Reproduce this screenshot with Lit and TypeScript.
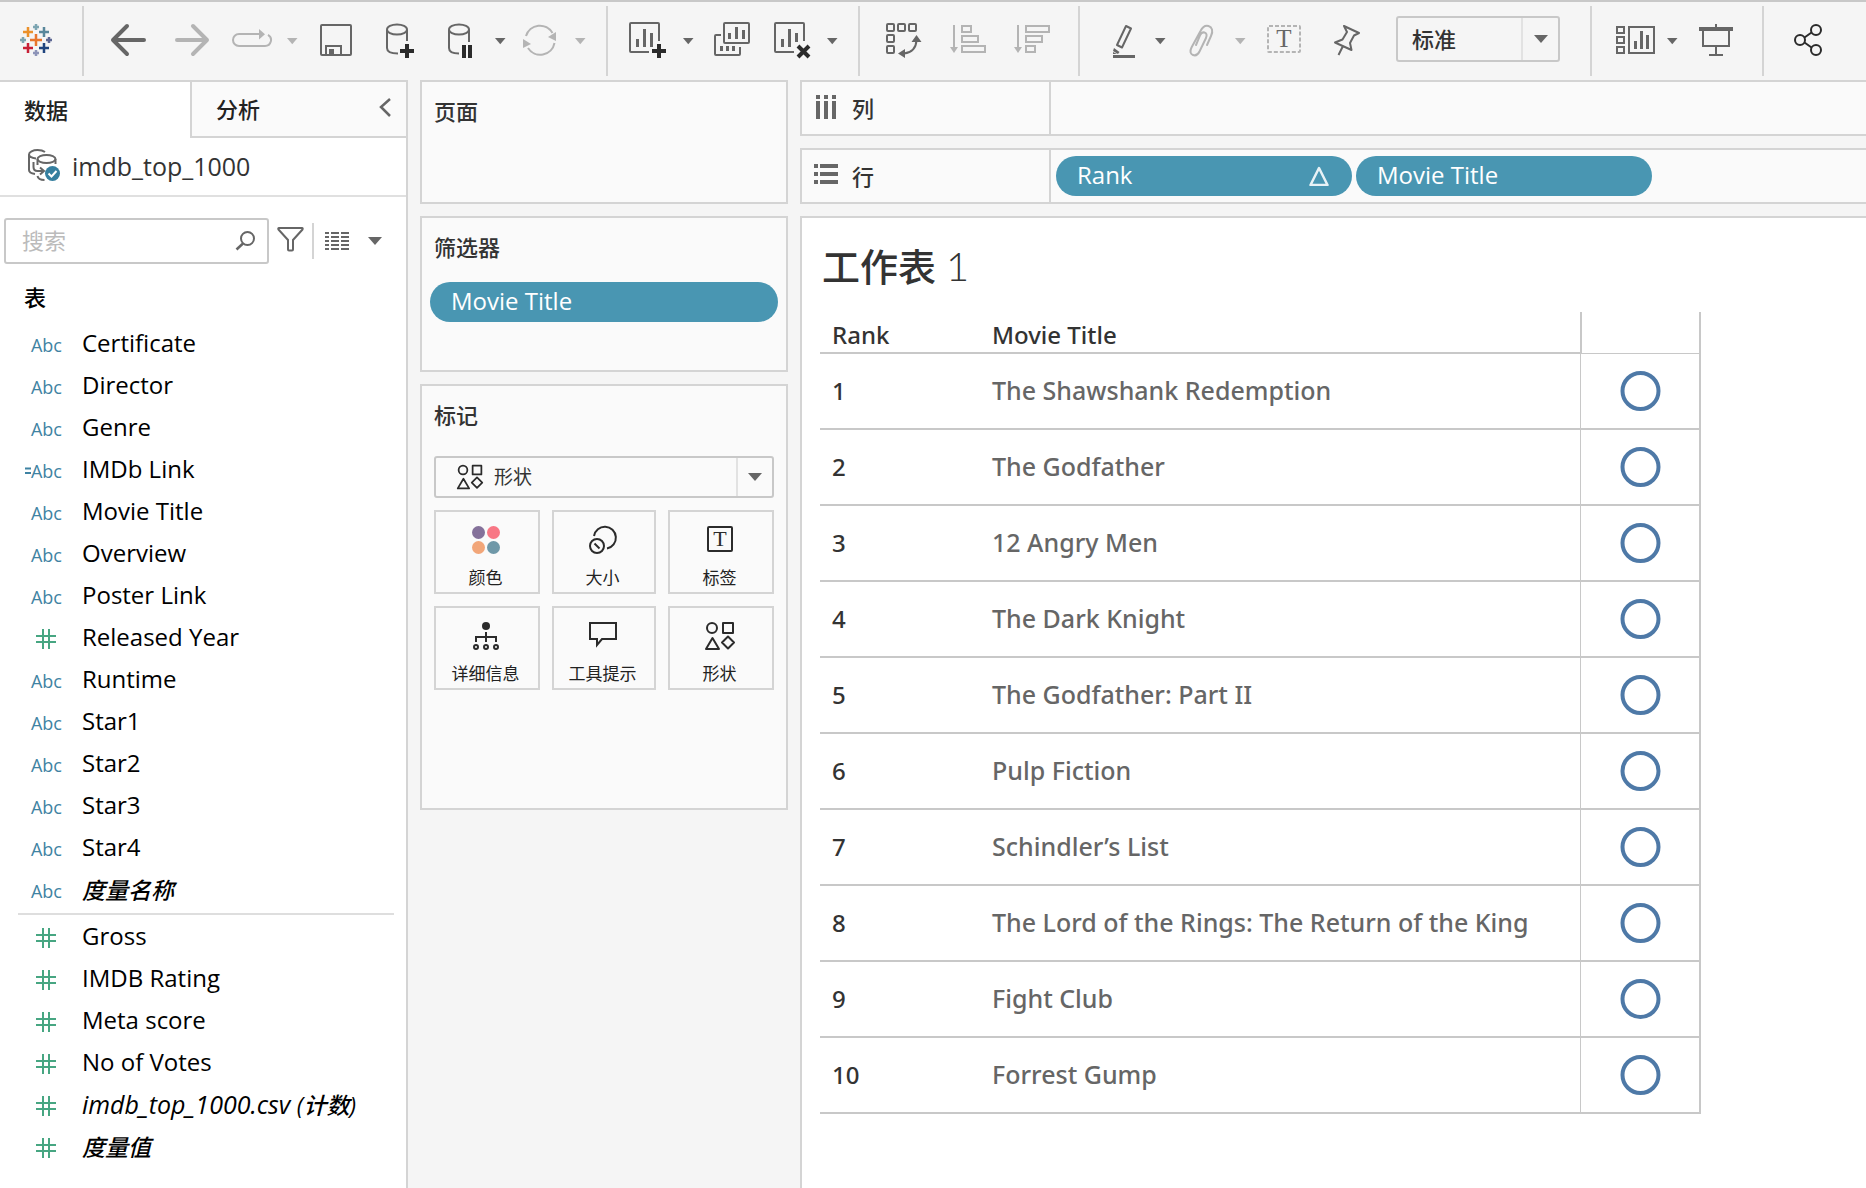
import { LitElement, html, svg, css, nothing, type TemplateResult } from "lit";
import { customElement, property } from "lit/decorators.js";

const glyph = (w: number, h: number, body: unknown) =>
  html`<svg width=${w} height=${h} viewBox="0 0 ${w} ${h}" fill="none" aria-hidden="true">${body}</svg>`;

const DARK = "#666666";
const MUTED = "#b4b4b4";
const INK = "#2b2b2b";

/* Toolbar drawings: 40 tall, 64, 56 or 24 wide. */
const toolArt: Record<string, unknown> = {
  back: svg`<path d="M31 6L17 20L31 34M17 20H48" stroke=${DARK} stroke-width="4" stroke-linecap="round" stroke-linejoin="round"/>`,
  forward: svg`<path d="M33 6L47 20L33 34M17 20H47" stroke=${MUTED} stroke-width="4" stroke-linecap="round" stroke-linejoin="round"/>`,
  replay: svg`<path d="M36 14H15a6 6 0 0 0 0 12H41a6 6 0 0 0 3-11.2" stroke=${MUTED} stroke-width="2"/><path d="M35 9l6 5.3-6 5.2z" fill=${MUTED}/>`,
  save: svg`<rect x="17" y="5" width="30" height="30" rx="1" stroke=${DARK} stroke-width="2"/><path d="M22 35V26H37V35" stroke=${DARK} stroke-width="2"/><rect x="25" y="29" width="5" height="5" fill=${DARK}/>`,
  addData: svg`<g stroke=${DARK} stroke-width="2"><ellipse cx="29" cy="9.5" rx="10" ry="5"/><path d="M19 10V28c0 3.500 4 5.500 11 5.500M39 10V21"/></g><path d="M39 24V38M32 31H46" stroke=${INK} stroke-width="4"/>`,
  pause: svg`<g stroke=${DARK} stroke-width="2"><ellipse cx="27" cy="9.5" rx="10" ry="5"/><path d="M17 10V28c0 3.500 4 5.500 10 5.500M37 10V22"/></g><path d="M32 25V38M38 25V38" stroke=${INK} stroke-width="4"/>`,
  refresh: svg`<path d="M14 16A14.500 14.500 0 0 1 40.500 13M42.500 23A14.500 14.500 0 0 1 16 28" stroke=${MUTED} stroke-width="2"/><path d="M36 17L44 12V21zM11 19L19 24L11 28z" fill=${MUTED}/>`,
  newSheet: svg`<path d="M29 32H11a1 1 0 0 1-1-1V4a1 1 0 0 1 1-1H38a1 1 0 0 1 1 1V21" stroke=${DARK} stroke-width="2"/><path d="M17.500 19V27M24.500 9V27M31.500 13V27" stroke=${DARK} stroke-width="3"/><path d="M39 24V38M32 31H46" stroke=${INK} stroke-width="4"/>`,
  duplicate: svg`<g stroke=${DARK} stroke-width="2"><rect x="24" y="3" width="25" height="20" rx="1"/><path d="M21 15H16a1 1 0 0 0-1 1V34a1 1 0 0 0 1 1H39a1 1 0 0 0 1-1V27"/></g><path d="M21.500 26V31M27.500 26V31M33.500 26V31M29.500 13V19M36.500 7V19M43.500 10V19" stroke=${DARK} stroke-width="3"/>`,
  clear: svg`<path d="M30 32H12a1 1 0 0 1-1-1V4a1 1 0 0 1 1-1H39a1 1 0 0 1 1 1V21" stroke=${DARK} stroke-width="2"/><path d="M18.500 19V27M25.500 9V27M32.500 13V22" stroke=${DARK} stroke-width="3"/><path d="M34 26L45 37M45 26L34 37" stroke=${INK} stroke-width="4"/>`,
  swap: svg`<g stroke=${DARK} stroke-width="2"><rect x="15" y="4" width="7" height="7" rx="1"/><rect x="26" y="4" width="7" height="7" rx="1"/><rect x="37" y="4" width="7" height="7" rx="1"/><rect x="15" y="15" width="7" height="7" rx="1"/><rect x="15" y="26" width="7" height="7" rx="1"/><path d="M44.500 20Q44 32 32 33.500"/></g><path d="M44.500 15l5 7h-10zM26 33.500l7-4.500v9z" fill=${DARK}/>`,
  sortUp: svg`<g stroke=${MUTED} stroke-width="2"><path d="M18 5V28"/><rect x="26" y="6" width="9" height="6"/><rect x="26" y="16" width="16" height="6"/><rect x="26" y="26" width="23" height="6"/></g><path d="M14 27h8l-4 6z" fill=${MUTED}/>`,
  sortDown: svg`<g stroke=${MUTED} stroke-width="2"><path d="M18 5V28"/><rect x="26" y="6" width="23" height="6"/><rect x="26" y="16" width="16" height="6"/><rect x="26" y="26" width="9" height="6"/></g><path d="M14 27h8l-4 6z" fill=${MUTED}/>`,
  highlight: svg`<path d="M34 6L39 8.500L30 27.500L25 25z" stroke=${DARK} stroke-width="2" stroke-linejoin="round"/><path d="M22 28l5.500 4-1.500 2-5-3zM21 32l4 2h-4z" fill=${DARK}/><path d="M21 36.500H43" stroke=${DARK} stroke-width="3"/>`,
  clip: svg`<path d="M35 25L39 16c2.500-5 1-9-2.500-10s-6 1-8 5L19.500 27.500c-2 4-1 6.500 1.500 7.500s5-.500 6.500-3.500L34 18c1.200-3 .500-5-1.500-5.500s-3.500.500-4.500 3L24 25" stroke=${MUTED} stroke-width="2" stroke-linecap="round"/>`,
  text: svg`<rect x="16" y="6" width="32" height="26" rx="1" stroke=${MUTED} stroke-width="2" stroke-dasharray="4 2"/><text x="32" y="27" text-anchor="middle" font-family="Liberation Serif, serif" font-size="25" fill=${DARK}>T</text>`,
  pin: svg`<path d="M28 6L43 13L38 15.500L34 23L35.500 30L19 22.500L26.500 19.500L31 12zM27 26L22.500 35" stroke=${DARK} stroke-width="2" stroke-linejoin="round"/>`,
  showMe: svg`<g stroke=${DARK} stroke-width="2"><rect x="13" y="7" width="7" height="6"/><rect x="13" y="17" width="7" height="6"/><rect x="13" y="27" width="7" height="6"/><rect x="25" y="7" width="25" height="26"/></g><path d="M31.500 21V29M37.500 11V29M43.500 15V29" stroke=${DARK} stroke-width="3"/>`,
  present: svg`<path d="M15 9H49" stroke=${DARK} stroke-width="4"/><path d="M32 4V8M19 10V26H45V10M32 26V35M25 35H39" stroke=${DARK} stroke-width="2"/>`,
  share: svg`<g stroke=${INK} stroke-width="2"><circle cx="24" cy="20" r="5"/><circle cx="40" cy="10" r="5"/><circle cx="40" cy="30" r="5"/><path d="M28.500 17.500L35.500 12.500M28.500 22.500L35.500 27.500"/></g>`,
};

const caret = (w: number, color = DARK) =>
  glyph(w, 8, svg`<path d="M0 0H${w}L${w / 2} 8z" fill=${color}/>`);

const shapesArt = svg`<g stroke=${INK} stroke-width="2" stroke-linejoin="round"><circle cx="8" cy="8" r="5"/><rect x="19" y="3" width="10" height="10"/><path d="M8.500 18L15 29H2zM24 16.500L30 22.500L24 28.500L18 22.500z"/></g>`;
const shapesIcon = (size: number) =>
  html`<svg width=${size} height=${size} viewBox="0 0 32 32" fill="none" aria-hidden="true">${shapesArt}</svg>`;

const markArt: Record<string, TemplateResult> = {
  颜色: glyph(32, 32, svg`<circle cx="8.5" cy="8.5" r="6.5" fill="#84719a"/><circle cx="23.500" cy="8.5" r="6.5" fill="#f87785"/><circle cx="8.5" cy="23.500" r="6.5" fill="#f2a679"/><circle cx="23.500" cy="23.500" r="6.5" fill="#6f98a8"/>`),
  大小: glyph(32, 32, svg`<g stroke=${INK} stroke-width="2"><path d="M7 12A11 11 0 1 1 20 24.500"/><circle cx="10" cy="22" r="7"/><path d="M7.500 19.500L12.500 24.500"/></g>`),
  标签: glyph(32, 32, svg`<rect x="4" y="3" width="24" height="24" rx="1" stroke=${INK} stroke-width="2"/><text x="16" y="22" text-anchor="middle" font-family="Liberation Serif, serif" font-size="22" fill=${INK}>T</text>`),
  详细信息: glyph(32, 32, svg`<circle cx="16" cy="6" r="4" fill=${INK}/><path d="M16 12V22M6 22V17H26V22" stroke=${INK} stroke-width="2"/><g stroke=${INK} stroke-width="2"><circle cx="6" cy="27" r="2"/><circle cx="16" cy="27" r="2"/><circle cx="26" cy="27" r="2"/></g>`),
  工具提示: glyph(32, 32, svg`<path d="M3 3H29V19H15L10 25V19H3z" stroke=${INK} stroke-width="2"/>`),
  形状: shapesIcon(32),
};

interface Field {
  name: string;
  kind: "abc" | "calc" | "num";
  italic?: boolean;
  note?: string;
}

const dimensions: Field[] = [
  { name: "Certificate", kind: "abc" },
  { name: "Director", kind: "abc" },
  { name: "Genre", kind: "abc" },
  { name: "IMDb Link", kind: "calc" },
  { name: "Movie Title", kind: "abc" },
  { name: "Overview", kind: "abc" },
  { name: "Poster Link", kind: "abc" },
  { name: "Released Year", kind: "num" },
  { name: "Runtime", kind: "abc" },
  { name: "Star1", kind: "abc" },
  { name: "Star2", kind: "abc" },
  { name: "Star3", kind: "abc" },
  { name: "Star4", kind: "abc" },
  { name: "", note: "度量名称", kind: "abc", italic: true },
];

const measures: Field[] = [
  { name: "Gross", kind: "num" },
  { name: "IMDB Rating", kind: "num" },
  { name: "Meta score", kind: "num" },
  { name: "No of Votes", kind: "num" },
  { name: "imdb_top_1000.csv ", note: "(计数)", kind: "num", italic: true },
  { name: "", note: "度量值", kind: "num", italic: true },
];

const movies = [
  "The Shawshank Redemption",
  "The Godfather",
  "12 Angry Men",
  "The Dark Knight",
  "The Godfather: Part II",
  "Pulp Fiction",
  "Schindler’s List",
  "The Lord of the Rings: The Return of the King",
  "Fight Club",
  "Forrest Gump",
];

const base = css`
  :host {
    display: block;
    font-family: "Open Sans", "Noto Sans CJK SC", sans-serif;
    font-size: 24px;
    color: #333333;
  }
  * {
    box-sizing: border-box;
  }
  button,
  input,
  select {
    font: inherit;
    color: inherit;
    margin: 0;
    padding: 0;
    border: 0;
    background: none;
    border-radius: 0;
    appearance: none;
    outline: none;
  }
  svg {
    display: block;
    flex: none;
  }
  h1,
  h2,
  ul {
    margin: 0;
    padding: 0;
    list-style: none;
    font-weight: 500;
  }
`;

@customElement("tool-bar")
class ToolBar extends LitElement {
  static styles = [
    base,
    css`
      .bar {
        display: flex;
        align-items: center;
        height: 80px;
        border-top: 2px solid #c8c8c8;
        background: #f5f5f5;
      }
      .group {
        display: flex;
        align-items: center;
        height: 70px;
        padding: 0 14px 2px 12px;
        border-left: 2px solid #d4d4d4;
      }
      .logo {
        width: 82px;
        padding: 0 0 2px 16px;
      }
      .view {
        display: grid;
        grid-template-columns: 1fr 37px;
        width: 164px;
        height: 46px;
        margin: 0 16px 2px;
        border: 2px solid #c8c8c8;
        border-radius: 3px;
      }
      .view select {
        grid-area: 1 / 1 / 2 / 3;
        padding-left: 14px;
        font-size: 22px;
        font-weight: 500;
      }
      .arrow {
        grid-area: 1 / 2;
        display: grid;
        place-items: center;
        border-left: 2px solid #e2e2e2;
        pointer-events: none;
      }
    `,
  ];

  private tool(name: string, label: string, w = 64) {
    return html`<button aria-label=${label}>${glyph(w, 40, toolArt[name])}</button>`;
  }

  private drop(label: string, color = DARK) {
    return html`<button aria-label=${label}>
      ${glyph(24, 40, svg`<path d="M7 18H17.500L12.250 24.300z" fill=${color}/>`)}
    </button>`;
  }

  render() {
    return html`
      <nav class="bar">
        <div class="logo">
          ${glyph(40, 40, svg`
            <g stroke-width="2.500">
              <path d="M20 14V26M14 20H26" stroke="#e8762d"/>
              <path d="M12 7V17M7 12H17" stroke="#eb912b"/>
              <path d="M28 7V17M23 12H33" stroke="#59879b"/>
              <path d="M12 23V33M7 28H17" stroke="#c72037"/>
              <path d="M28 23V33M23 28H33" stroke="#1f447e"/>
              <path d="M20 4V10M17 7H23M7 17V23M4 20H10" stroke="#7ca5b2"/>
              <path d="M33 17V23M30 20H36" stroke="#5c6692"/>
              <path d="M20 30V36M17 33H23" stroke="#8d94b8"/>
            </g>`)}
        </div>
        <div class="group">
          ${this.tool("back", "后退")} ${this.tool("forward", "前进")}
          ${this.tool("replay", "重播", 56)} ${this.drop("重播选项", MUTED)}
          ${this.tool("save", "保存")} ${this.tool("addData", "新建数据源")}
          ${this.tool("pause", "暂停更新", 56)} ${this.drop("更新选项")}
          ${this.tool("refresh", "运行更新", 56)} ${this.drop("运行选项", MUTED)}
        </div>
        <div class="group">
          ${this.tool("newSheet", "新建工作表", 56)} ${this.drop("新建选项")}
          ${this.tool("duplicate", "复制")}
          ${this.tool("clear", "清除", 56)} ${this.drop("清除选项")}
        </div>
        <div class="group">
          ${this.tool("swap", "交换行和列")} ${this.tool("sortUp", "升序排序")}
          ${this.tool("sortDown", "降序排序")}
        </div>
        <div class="group">
          ${this.tool("highlight", "突出显示", 56)} ${this.drop("突出显示选项")}
          ${this.tool("clip", "成员分组", 56)} ${this.drop("分组选项", MUTED)}
          ${this.tool("text", "显示标记标签")} ${this.tool("pin", "固定轴")}
          <div class="view">
            <select aria-label="适应"><option>标准</option></select>
            <span class="arrow">${caret(14)}</span>
          </div>
        </div>
        <div class="group">
          ${this.tool("showMe", "智能推荐", 56)} ${this.drop("智能推荐选项")}
          ${this.tool("present", "演示模式")}
        </div>
        <div class="group">${this.tool("share", "共享")}</div>
      </nav>
    `;
  }
}

@customElement("data-pane")
class DataPane extends LitElement {
  static styles = [
    base,
    css`
      :host {
        border-top: 2px solid #d4d4d4;
        border-right: 2px solid #d4d4d4;
        background: #ffffff;
        color: #000000;
      }
      .tabs {
        display: grid;
        grid-template-columns: 190px 1fr;
        height: 56px;
        font-size: 22px;
        color: #222222;
      }
      .tab {
        display: flex;
        align-items: center;
        padding: 0 0 2px 24px;
        font-weight: 500;
      }
      .rest {
        display: flex;
        border-left: 2px solid #d4d4d4;
        border-bottom: 2px solid #d4d4d4;
        background: #fafafa;
      }
      .rest .tab {
        flex: 1;
      }
      .fold {
        padding: 0 14px 4px 0;
      }
      .source {
        display: flex;
        align-items: center;
        gap: 11px;
        width: 100%;
        height: 59px;
        padding: 0 0 2px 28px;
        border-bottom: 2px solid #e0e0e0;
        font-size: 25px;
        color: #333333;
      }
      .find {
        display: flex;
        align-items: center;
        padding: 21px 24px 0 4px;
      }
      .box {
        display: flex;
        align-items: center;
        flex: 1;
        min-width: 0;
        height: 46px;
        padding: 0 12px 0 16px;
        border: 2px solid #c8c8c8;
        border-radius: 3px;
      }
      input {
        flex: 1;
        min-width: 0;
        padding-bottom: 2px;
        font-size: 22px;
      }
      input::placeholder {
        color: #bbbbbb;
      }
      .filter {
        padding: 0 8px 4px 7px;
      }
      .list {
        display: flex;
        align-items: center;
        gap: 19px;
        height: 36px;
        padding-left: 11px;
        border-left: 2px solid #d4d4d4;
      }
      .caption {
        padding: 12px 0 4px 24px;
        font-size: 22px;
        line-height: 42px;
      }
      .field {
        display: flex;
        align-items: center;
        width: 100%;
        height: 42px;
        text-align: left;
        line-height: 42px;
        white-space: nowrap;
      }
      .kind {
        display: flex;
        align-items: center;
        justify-content: flex-end;
        width: 62px;
        height: 42px;
        margin-right: 20px;
        padding-top: 3px;
        font-size: 18px;
        color: #3f83a3;
      }
      .kind.num {
        padding-right: 6px;
      }
      .italic {
        font-style: italic;
        font-size: 25px;
      }
      .note {
        font-size: 23px;
      }
      .rule {
        height: 2px;
        margin: 3px 12px 0 18px;
        background: #dedede;
      }
    `,
  ];

  private field(f: Field) {
    return html`<li>
      <button class="field">
        <span class="kind ${f.kind}">
          ${f.kind === "num"
            ? glyph(20, 20, svg`<path d="M7 0V20M13 0V20M0 7H20M0 13H20" stroke="#47a682" stroke-width="2"/>`)
            : f.kind === "calc"
              ? html`${glyph(6, 8, svg`<path d="M0 1.500H6M0 6H6" stroke="#3f83a3" stroke-width="2"/>`)}Abc`
              : "Abc"}
        </span>
        <span class=${f.italic ? "italic" : "plain"}>${f.name}${f.note ? html`<span class="note">${f.note}</span>` : nothing}</span>
      </button>
    </li>`;
  }

  render() {
    return html`
      <div class="tabs">
        <button class="tab">数据</button>
        <div class="rest">
          <button class="tab">分析</button>
          <button class="fold" aria-label="折叠">
            ${glyph(14, 22, svg`<path d="M12 3L3 11L12 20" stroke=${DARK} stroke-width="2.500"/>`)}
          </button>
        </div>
      </div>
      <button class="source">
        ${glyph(33, 33, svg`
          <g stroke=${DARK} stroke-width="2">
            <path d="M17 3C15 1.500 12 1 9.500 1C5 1 1 3 1 5.500V21c0 2 2.500 3.500 6 4M1 5.500c0 2 3 3.500 7 4"/>
            <ellipse cx="18.500" cy="10" rx="9" ry="4"/>
            <path d="M9.500 10V16M27.500 10V15M5.500 13V18c0 3 1 4 4 4h5M12 18.500l4 3.500-4 3.500M9.500 27c.500 2.500 3 4 7 4"/>
          </g>
          <circle cx="24.500" cy="24.500" r="7.500" fill="#357f9f"/>
          <path d="M20.500 24.500l3 3 5-5.500" stroke="#ffffff" stroke-width="2"/>`)}
        imdb_top_1000
      </button>
      <div class="find">
        <label class="box">
          <input type="text" placeholder="搜索" aria-label="搜索" />
          ${glyph(20, 20, svg`<circle cx="12.500" cy="7.500" r="6.5" stroke=${DARK} stroke-width="2"/><path d="M8 12.500L1.500 18.500" stroke=${DARK} stroke-width="2.500"/>`)}
        </label>
        <button class="filter" aria-label="筛选">
          ${glyph(28, 28, svg`<path d="M3 3h23c.800 0 .900 1 .500 1.500L17 15v9.500c0 .600-.300 1-1 1h-3c-.600 0-1-.400-1-1V15L2.500 4.500C2 4 2.200 3 3 3z" stroke=${DARK} stroke-width="2"/>`)}
        </button>
        <button class="list" aria-label="查看方式">
          ${glyph(24, 20, svg`<path d="M0 2H4M6 2H14M16 2H24M0 6H4M6 6H14M16 6H24M0 10H4M6 10H14M16 10H24M0 14H4M6 14H14M16 14H24M0 18H4M6 18H14M16 18H24" stroke=${DARK} stroke-width="2"/>`)}
          ${caret(14)}
        </button>
      </div>
      <h2 class="caption">表</h2>
      <ul>${dimensions.map((f) => this.field(f))}</ul>
      <div class="rule"></div>
      <ul>${measures.map((f) => this.field(f))}</ul>
    `;
  }
}

@customElement("field-pill")
class FieldPill extends LitElement {
  @property() label = "";
  @property({ type: Boolean }) sorted = false;

  static styles = [
    base,
    css`
      button {
        display: flex;
        align-items: center;
        justify-content: space-between;
        width: 100%;
        height: 40px;
        padding: 0 21px 2px;
        border-radius: 20px;
        background: #4996b2;
        color: #ffffff;
        line-height: 38px;
      }
    `,
  ];

  render() {
    return html`<button>
      ${this.label}
      ${this.sorted
        ? glyph(24, 22, svg`<path d="M12 4L20.500 21H3.500z" stroke="#e8f2f6" stroke-width="2.500" stroke-linejoin="round"/>`)
        : nothing}
    </button>`;
  }
}

@customElement("card-column")
class CardColumn extends LitElement {
  static styles = [
    base,
    css`
      :host {
        display: flex;
        flex-direction: column;
        gap: 12px;
      }
      .card {
        min-height: 124px;
        padding: 10px 8px;
        border: 2px solid #d4d4d4;
        background: #fafafa;
      }
      .filters {
        min-height: 156px;
      }
      .marks {
        min-height: 426px;
        padding: 10px 12px;
      }
      h2 {
        padding: 0 0 2px 4px;
        font-size: 22px;
        line-height: 38px;
      }
      .marks h2 {
        padding-left: 0;
      }
      field-pill {
        margin-top: 14px;
      }
      .type {
        display: grid;
        grid-template-columns: 48px 1fr 36px;
        align-items: center;
        height: 42px;
        margin: 20px 0 12px;
        border: 2px solid #c8c8c8;
        border-radius: 3px;
      }
      .type > svg {
        grid-area: 1 / 1;
        justify-self: end;
      }
      select {
        grid-area: 1 / 1 / 2 / 4;
        height: 38px;
        padding-left: 58px;
        font-size: 19px;
      }
      .arrow {
        grid-area: 1 / 3;
        display: grid;
        place-items: center;
        height: 38px;
        border-left: 2px solid #e2e2e2;
        pointer-events: none;
      }
      .grid {
        display: grid;
        grid-template-columns: 106fr 104fr 106fr;
        gap: 12px;
      }
      .mark {
        display: flex;
        flex-direction: column;
        align-items: center;
        gap: 10px;
        height: 84px;
        padding: 12px 3px 0 0;
        border: 2px solid #d4d4d4;
        font-size: 17px;
        line-height: 24px;
        white-space: nowrap;
        color: #222222;
      }
    `,
  ];

  render() {
    return html`
      <section class="card"><h2>页面</h2></section>
      <section class="card filters">
        <h2>筛选器</h2>
        <field-pill label="Movie Title"></field-pill>
      </section>
      <section class="card marks">
        <h2>标记</h2>
        <div class="type">
          <select aria-label="标记类型"><option>形状</option></select>
          ${shapesIcon(28)}
          <span class="arrow">${caret(14)}</span>
        </div>
        <div class="grid">
          ${Object.entries(markArt).map(([name, art]) => html`<button class="mark">${art}<span>${name}</span></button>`)}
        </div>
      </section>
    `;
  }
}

@customElement("work-sheet")
class WorkSheet extends LitElement {
  static styles = [
    base,
    css`
      :host {
        display: flex;
        flex-direction: column;
        gap: 12px;
        min-width: 0;
      }
      .shelf {
        display: grid;
        grid-template-columns: 249px 1fr;
        height: 56px;
        border: 2px solid #d4d4d4;
        border-right: 0;
        background: #fafafa;
      }
      .name {
        display: flex;
        align-items: center;
        gap: 14px;
        padding: 0 0 2px 12px;
        border-right: 2px solid #d4d4d4;
        font-size: 22px;
        font-weight: 500;
      }
      .pills {
        display: flex;
        align-items: center;
        gap: 4px;
        padding-left: 5px;
      }
      .pills field-pill {
        flex: 0 1 296px;
      }
      .sheet {
        flex: 1;
        padding: 18px;
        border: 2px solid #d4d4d4;
        border-right: 0;
        border-bottom: 0;
        background: #ffffff;
      }
      h1 {
        padding: 0 0 16px 2px;
        font-size: 38px;
        line-height: 60px;
      }
      .index {
        font-family: Lato, sans-serif;
        font-size: 40px;
        font-weight: 300;
      }
      table {
        border-collapse: separate;
        border-spacing: 0;
        font-family: "Noto Sans", sans-serif;
        font-weight: 500;
        table-layout: fixed;
        width: 881px;
      }
      th,
      td {
        padding: 0 0 0 12px;
        border-bottom: 2px solid #c8c8c8;
        text-align: left;
        font-weight: 500;
        white-space: nowrap;
      }
      th {
        height: 42px;
        padding-top: 6px;
        line-height: 34px;
      }
      td {
        height: 76px;
        padding-bottom: 2px;
        font-size: 25px;
        color: #666666;
      }
      td.rank {
        font-size: 24px;
        color: #333333;
      }
      .c1 {
        width: 160px;
      }
      .c3 {
        width: 121px;
      }
      .shape {
        padding: 0;
        border-left: 1px solid #c8c8c8;
        border-right: 2px solid #c8c8c8;
      }
      th.shape {
        border-left-width: 2px;
        border-bottom-width: 1px;
      }
      .shape svg {
        margin: 0 auto;
      }
    `,
  ];

  render() {
    return html`
      <section class="shelf">
        <div class="name">
          ${glyph(24, 24, svg`<path d="M4 0V4M4 6V24M12 0V4M12 6V24M20 0V4M20 6V24" stroke=${DARK} stroke-width="4"/>`)}
          列
        </div>
        <div class="pills"></div>
      </section>
      <section class="shelf">
        <div class="name">
          ${glyph(24, 24, svg`<path d="M0 3H4M6 3H24M0 11H4M6 11H24M0 19H4M6 19H24" stroke=${DARK} stroke-width="4"/>`)}
          行
        </div>
        <div class="pills">
          <field-pill label="Rank" sorted></field-pill>
          <field-pill label="Movie Title"></field-pill>
        </div>
      </section>
      <main class="sheet">
        <h1>工作表 <span class="index">1</span></h1>
        <table>
          <thead>
            <tr>
              <th class="c1">Rank</th>
              <th>Movie Title</th>
              <th class="shape c3" aria-label="形状"></th>
            </tr>
          </thead>
          <tbody>
            ${movies.map(
              (title, i) => html`<tr>
                <td class="rank">${i + 1}</td>
                <td>${title}</td>
                <td class="shape">
                  ${glyph(42, 42, svg`<circle cx="21.500" cy="21" r="18" stroke="#4e79a7" stroke-width="4"/>`)}
                </td>
              </tr>`,
            )}
          </tbody>
        </table>
      </main>
    `;
  }
}

@customElement("app-root")
class AppRoot extends LitElement {
  static styles = [
    base,
    css`
      :host {
        display: flex;
        flex-direction: column;
        min-height: 100vh;
        background: #f5f5f5;
      }
      .body {
        flex: 1;
        display: grid;
        grid-template-columns: 408px 368px minmax(0, 1fr);
        column-gap: 12px;
      }
    `,
  ];

  render() {
    return html`
      <tool-bar></tool-bar>
      <div class="body">
        <data-pane></data-pane>
        <card-column></card-column>
        <work-sheet></work-sheet>
      </div>
    `;
  }
}
